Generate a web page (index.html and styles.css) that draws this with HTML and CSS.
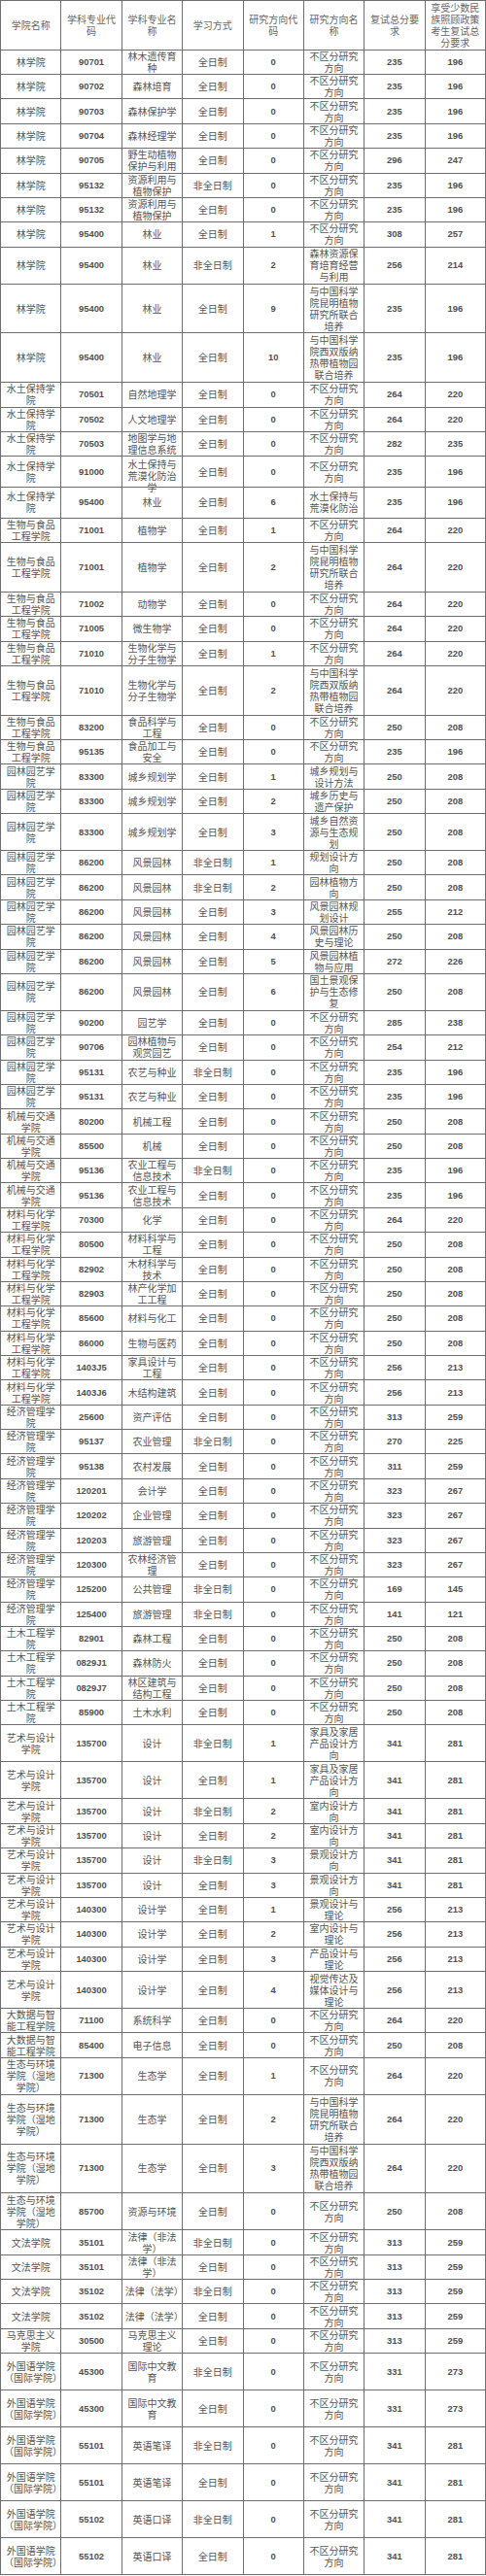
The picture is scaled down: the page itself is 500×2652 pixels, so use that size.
FILE: index.html
```html
<!DOCTYPE html>
<html lang="zh-CN">
<head>
<meta charset="utf-8">
<title>复试分数线</title>
<link rel="stylesheet" href="styles.css">
</head>
<body>
<table class="sheet">
<thead>
<tr class="u4"><th>学院名称</th><th>学科专业代码</th><th>学科专业名称</th><th>学习方式</th><th>研究方向代码</th><th>研究方向名称</th><th>复试总分要求</th><th>享受少数民族照顾政策考生复试总分要求</th></tr>
</thead>
<tbody>
<tr class="u2"><td>林学院</td><td>90701</td><td>林木遗传育种</td><td>全日制</td><td>0</td><td>不区分研究方向</td><td>235</td><td>196</td></tr>
<tr class="u2"><td>林学院</td><td>90702</td><td>森林培育</td><td>全日制</td><td>0</td><td>不区分研究方向</td><td>235</td><td>196</td></tr>
<tr class="u2"><td>林学院</td><td>90703</td><td>森林保护学</td><td>全日制</td><td>0</td><td>不区分研究方向</td><td>235</td><td>196</td></tr>
<tr class="u2"><td>林学院</td><td>90704</td><td>森林经理学</td><td>全日制</td><td>0</td><td>不区分研究方向</td><td>235</td><td>196</td></tr>
<tr class="u2"><td>林学院</td><td>90705</td><td>野生动植物保护与利用</td><td>全日制</td><td>0</td><td>不区分研究方向</td><td>296</td><td>247</td></tr>
<tr class="u2"><td>林学院</td><td>95132</td><td>资源利用与植物保护</td><td>非全日制</td><td>0</td><td>不区分研究方向</td><td>235</td><td>196</td></tr>
<tr class="u2"><td>林学院</td><td>95132</td><td>资源利用与植物保护</td><td>全日制</td><td>0</td><td>不区分研究方向</td><td>235</td><td>196</td></tr>
<tr class="u2"><td>林学院</td><td>95400</td><td>林业</td><td>全日制</td><td>1</td><td>不区分研究方向</td><td>308</td><td>257</td></tr>
<tr class="u3"><td>林学院</td><td>95400</td><td>林业</td><td>非全日制</td><td>2</td><td>森林资源保育培育经营与利用</td><td>256</td><td>214</td></tr>
<tr class="u4"><td>林学院</td><td>95400</td><td>林业</td><td>全日制</td><td>9</td><td>与中国科学院昆明植物研究所联合培养</td><td>235</td><td>196</td></tr>
<tr class="u4"><td>林学院</td><td>95400</td><td>林业</td><td>全日制</td><td>10</td><td>与中国科学院西双版纳热带植物园联合培养</td><td>235</td><td>196</td></tr>
<tr class="u2"><td>水土保持学院</td><td>70501</td><td>自然地理学</td><td>全日制</td><td>0</td><td>不区分研究方向</td><td>264</td><td>220</td></tr>
<tr class="u2"><td>水土保持学院</td><td>70502</td><td>人文地理学</td><td>全日制</td><td>0</td><td>不区分研究方向</td><td>264</td><td>220</td></tr>
<tr class="u2"><td>水土保持学院</td><td>70503</td><td>地图学与地理信息系统</td><td>全日制</td><td>0</td><td>不区分研究方向</td><td>282</td><td>235</td></tr>
<tr class="u25"><td>水土保持学院</td><td>91000</td><td><div class="spill">水土保持与荒漠化防治学</div></td><td>全日制</td><td>0</td><td>不区分研究方向</td><td>235</td><td>196</td></tr>
<tr class="u25"><td>水土保持学院</td><td>95400</td><td>林业</td><td>全日制</td><td>6</td><td>水土保持与荒漠化防治</td><td>235</td><td>196</td></tr>
<tr class="u2"><td>生物与食品工程学院</td><td>71001</td><td>植物学</td><td>全日制</td><td>1</td><td>不区分研究方向</td><td>264</td><td>220</td></tr>
<tr class="u4"><td>生物与食品工程学院</td><td>71001</td><td>植物学</td><td>全日制</td><td>2</td><td>与中国科学院昆明植物研究所联合培养</td><td>264</td><td>220</td></tr>
<tr class="u2"><td>生物与食品工程学院</td><td>71002</td><td>动物学</td><td>全日制</td><td>0</td><td>不区分研究方向</td><td>264</td><td>220</td></tr>
<tr class="u2"><td>生物与食品工程学院</td><td>71005</td><td>微生物学</td><td>全日制</td><td>0</td><td>不区分研究方向</td><td>264</td><td>220</td></tr>
<tr class="u2"><td>生物与食品工程学院</td><td>71010</td><td>生物化学与分子生物学</td><td>全日制</td><td>1</td><td>不区分研究方向</td><td>264</td><td>220</td></tr>
<tr class="u4"><td>生物与食品工程学院</td><td>71010</td><td>生物化学与分子生物学</td><td>全日制</td><td>2</td><td>与中国科学院西双版纳热带植物园联合培养</td><td>264</td><td>220</td></tr>
<tr class="u2"><td>生物与食品工程学院</td><td>83200</td><td>食品科学与工程</td><td>全日制</td><td>0</td><td>不区分研究方向</td><td>250</td><td>208</td></tr>
<tr class="u2"><td>生物与食品工程学院</td><td>95135</td><td>食品加工与安全</td><td>全日制</td><td>0</td><td>不区分研究方向</td><td>235</td><td>196</td></tr>
<tr class="u2"><td>园林园艺学院</td><td>83300</td><td>城乡规划学</td><td>全日制</td><td>1</td><td>城乡规划与设计方法</td><td>250</td><td>208</td></tr>
<tr class="u2"><td>园林园艺学院</td><td>83300</td><td>城乡规划学</td><td>全日制</td><td>2</td><td>城乡历史与遗产保护</td><td>250</td><td>208</td></tr>
<tr class="u3"><td>园林园艺学院</td><td>83300</td><td>城乡规划学</td><td>全日制</td><td>3</td><td>城乡自然资源与生态规划</td><td>250</td><td>208</td></tr>
<tr class="u2"><td>园林园艺学院</td><td>86200</td><td>风景园林</td><td>非全日制</td><td>1</td><td>规划设计方向</td><td>250</td><td>208</td></tr>
<tr class="u2"><td>园林园艺学院</td><td>86200</td><td>风景园林</td><td>非全日制</td><td>2</td><td>园林植物方向</td><td>250</td><td>208</td></tr>
<tr class="u2"><td>园林园艺学院</td><td>86200</td><td>风景园林</td><td>全日制</td><td>3</td><td>风景园林规划设计</td><td>255</td><td>212</td></tr>
<tr class="u2"><td>园林园艺学院</td><td>86200</td><td>风景园林</td><td>全日制</td><td>4</td><td>风景园林历史与理论</td><td>250</td><td>208</td></tr>
<tr class="u2"><td>园林园艺学院</td><td>86200</td><td>风景园林</td><td>全日制</td><td>5</td><td>风景园林植物与应用</td><td>272</td><td>226</td></tr>
<tr class="u3"><td>园林园艺学院</td><td>86200</td><td>风景园林</td><td>全日制</td><td>6</td><td>国土景观保护与生态修复</td><td>250</td><td>208</td></tr>
<tr class="u2"><td>园林园艺学院</td><td>90200</td><td>园艺学</td><td>全日制</td><td>0</td><td>不区分研究方向</td><td>285</td><td>238</td></tr>
<tr class="u2"><td>园林园艺学院</td><td>90706</td><td>园林植物与观赏园艺</td><td>全日制</td><td>0</td><td>不区分研究方向</td><td>254</td><td>212</td></tr>
<tr class="u2"><td>园林园艺学院</td><td>95131</td><td>农艺与种业</td><td>非全日制</td><td>0</td><td>不区分研究方向</td><td>235</td><td>196</td></tr>
<tr class="u2"><td>园林园艺学院</td><td>95131</td><td>农艺与种业</td><td>全日制</td><td>0</td><td>不区分研究方向</td><td>235</td><td>196</td></tr>
<tr class="u2"><td>机械与交通学院</td><td>80200</td><td>机械工程</td><td>全日制</td><td>0</td><td>不区分研究方向</td><td>250</td><td>208</td></tr>
<tr class="u2"><td>机械与交通学院</td><td>85500</td><td>机械</td><td>全日制</td><td>0</td><td>不区分研究方向</td><td>250</td><td>208</td></tr>
<tr class="u2"><td>机械与交通学院</td><td>95136</td><td>农业工程与信息技术</td><td>非全日制</td><td>0</td><td>不区分研究方向</td><td>235</td><td>196</td></tr>
<tr class="u2"><td>机械与交通学院</td><td>95136</td><td>农业工程与信息技术</td><td>全日制</td><td>0</td><td>不区分研究方向</td><td>235</td><td>196</td></tr>
<tr class="u2"><td>材料与化学工程学院</td><td>70300</td><td>化学</td><td>全日制</td><td>0</td><td>不区分研究方向</td><td>264</td><td>220</td></tr>
<tr class="u2"><td>材料与化学工程学院</td><td>80500</td><td>材料科学与工程</td><td>全日制</td><td>0</td><td>不区分研究方向</td><td>250</td><td>208</td></tr>
<tr class="u2"><td>材料与化学工程学院</td><td>82902</td><td>木材科学与技术</td><td>全日制</td><td>0</td><td>不区分研究方向</td><td>250</td><td>208</td></tr>
<tr class="u2"><td>材料与化学工程学院</td><td>82903</td><td>林产化学加工工程</td><td>全日制</td><td>0</td><td>不区分研究方向</td><td>250</td><td>208</td></tr>
<tr class="u2"><td>材料与化学工程学院</td><td>85600</td><td>材料与化工</td><td>全日制</td><td>0</td><td>不区分研究方向</td><td>250</td><td>208</td></tr>
<tr class="u2"><td>材料与化学工程学院</td><td>86000</td><td>生物与医药</td><td>全日制</td><td>0</td><td>不区分研究方向</td><td>250</td><td>208</td></tr>
<tr class="u2"><td>材料与化学工程学院</td><td>1403J5</td><td>家具设计与工程</td><td>全日制</td><td>0</td><td>不区分研究方向</td><td>256</td><td>213</td></tr>
<tr class="u2"><td>材料与化学工程学院</td><td>1403J6</td><td>木结构建筑</td><td>全日制</td><td>0</td><td>不区分研究方向</td><td>256</td><td>213</td></tr>
<tr class="u2"><td>经济管理学院</td><td>25600</td><td>资产评估</td><td>全日制</td><td>0</td><td>不区分研究方向</td><td>313</td><td>259</td></tr>
<tr class="u2"><td>经济管理学院</td><td>95137</td><td>农业管理</td><td>非全日制</td><td>0</td><td>不区分研究方向</td><td>270</td><td>225</td></tr>
<tr class="u2"><td>经济管理学院</td><td>95138</td><td>农村发展</td><td>全日制</td><td>0</td><td>不区分研究方向</td><td>311</td><td>259</td></tr>
<tr class="u2"><td>经济管理学院</td><td>120201</td><td>会计学</td><td>全日制</td><td>0</td><td>不区分研究方向</td><td>323</td><td>267</td></tr>
<tr class="u2"><td>经济管理学院</td><td>120202</td><td>企业管理</td><td>全日制</td><td>0</td><td>不区分研究方向</td><td>323</td><td>267</td></tr>
<tr class="u2"><td>经济管理学院</td><td>120203</td><td>旅游管理</td><td>全日制</td><td>0</td><td>不区分研究方向</td><td>323</td><td>267</td></tr>
<tr class="u2"><td>经济管理学院</td><td>120300</td><td>农林经济管理</td><td>全日制</td><td>0</td><td>不区分研究方向</td><td>323</td><td>267</td></tr>
<tr class="u2"><td>经济管理学院</td><td>125200</td><td>公共管理</td><td>非全日制</td><td>0</td><td>不区分研究方向</td><td>169</td><td>145</td></tr>
<tr class="u2"><td>经济管理学院</td><td>125400</td><td>旅游管理</td><td>非全日制</td><td>0</td><td>不区分研究方向</td><td>141</td><td>121</td></tr>
<tr class="u2"><td>土木工程学院</td><td>82901</td><td>森林工程</td><td>全日制</td><td>0</td><td>不区分研究方向</td><td>250</td><td>208</td></tr>
<tr class="u2"><td>土木工程学院</td><td>0829J1</td><td>森林防火</td><td>全日制</td><td>0</td><td>不区分研究方向</td><td>250</td><td>208</td></tr>
<tr class="u2"><td>土木工程学院</td><td>0829J7</td><td>林区建筑与结构工程</td><td>全日制</td><td>0</td><td>不区分研究方向</td><td>250</td><td>208</td></tr>
<tr class="u2"><td>土木工程学院</td><td>85900</td><td>土木水利</td><td>全日制</td><td>0</td><td>不区分研究方向</td><td>250</td><td>208</td></tr>
<tr class="u3"><td>艺术与设计学院</td><td>135700</td><td>设计</td><td>非全日制</td><td>1</td><td>家具及家居产品设计方向</td><td>341</td><td>281</td></tr>
<tr class="u3"><td>艺术与设计学院</td><td>135700</td><td>设计</td><td>全日制</td><td>1</td><td>家具及家居产品设计方向</td><td>341</td><td>281</td></tr>
<tr class="u2"><td>艺术与设计学院</td><td>135700</td><td>设计</td><td>非全日制</td><td>2</td><td>室内设计方向</td><td>341</td><td>281</td></tr>
<tr class="u2"><td>艺术与设计学院</td><td>135700</td><td>设计</td><td>全日制</td><td>2</td><td>室内设计方向</td><td>341</td><td>281</td></tr>
<tr class="u2"><td>艺术与设计学院</td><td>135700</td><td>设计</td><td>非全日制</td><td>3</td><td>景观设计方向</td><td>341</td><td>281</td></tr>
<tr class="u2"><td>艺术与设计学院</td><td>135700</td><td>设计</td><td>全日制</td><td>3</td><td>景观设计方向</td><td>341</td><td>281</td></tr>
<tr class="u2"><td>艺术与设计学院</td><td>140300</td><td>设计学</td><td>全日制</td><td>1</td><td>景观设计与理论</td><td>256</td><td>213</td></tr>
<tr class="u2"><td>艺术与设计学院</td><td>140300</td><td>设计学</td><td>全日制</td><td>2</td><td>室内设计与理论</td><td>256</td><td>213</td></tr>
<tr class="u2"><td>艺术与设计学院</td><td>140300</td><td>设计学</td><td>全日制</td><td>3</td><td>产品设计与理论</td><td>256</td><td>213</td></tr>
<tr class="u3"><td>艺术与设计学院</td><td>140300</td><td>设计学</td><td>全日制</td><td>4</td><td>视觉传达及媒体设计与理论</td><td>256</td><td>213</td></tr>
<tr class="u2"><td>大数据与智能工程学院</td><td>71100</td><td>系统科学</td><td>全日制</td><td>0</td><td>不区分研究方向</td><td>264</td><td>220</td></tr>
<tr class="u2"><td>大数据与智能工程学院</td><td>85400</td><td>电子信息</td><td>全日制</td><td>0</td><td>不区分研究方向</td><td>250</td><td>208</td></tr>
<tr class="u3"><td>生态与环境学院（湿地学院）</td><td>71300</td><td>生态学</td><td>全日制</td><td>1</td><td>不区分研究方向</td><td>264</td><td>220</td></tr>
<tr class="u4"><td>生态与环境学院（湿地学院）</td><td>71300</td><td>生态学</td><td>全日制</td><td>2</td><td>与中国科学院昆明植物研究所联合培养</td><td>264</td><td>220</td></tr>
<tr class="u4"><td>生态与环境学院（湿地学院）</td><td>71300</td><td>生态学</td><td>全日制</td><td>3</td><td>与中国科学院西双版纳热带植物园联合培养</td><td>264</td><td>220</td></tr>
<tr class="u3"><td>生态与环境学院（湿地学院）</td><td>85700</td><td>资源与环境</td><td>全日制</td><td>0</td><td>不区分研究方向</td><td>250</td><td>208</td></tr>
<tr class="u2"><td>文法学院</td><td>35101</td><td>法律（非法学）</td><td>非全日制</td><td>0</td><td>不区分研究方向</td><td>313</td><td>259</td></tr>
<tr class="u2"><td>文法学院</td><td>35101</td><td>法律（非法学）</td><td>全日制</td><td>0</td><td>不区分研究方向</td><td>313</td><td>259</td></tr>
<tr class="u2"><td>文法学院</td><td>35102</td><td>法律（法学）</td><td>非全日制</td><td>0</td><td>不区分研究方向</td><td>313</td><td>259</td></tr>
<tr class="u2"><td>文法学院</td><td>35102</td><td>法律（法学）</td><td>全日制</td><td>0</td><td>不区分研究方向</td><td>313</td><td>259</td></tr>
<tr class="u2"><td>马克思主义学院</td><td>30500</td><td>马克思主义理论</td><td>全日制</td><td>0</td><td>不区分研究方向</td><td>313</td><td>259</td></tr>
<tr class="u3"><td>外国语学院（国际学院）</td><td>45300</td><td>国际中文教育</td><td>非全日制</td><td>0</td><td>不区分研究方向</td><td>331</td><td>273</td></tr>
<tr class="u3"><td>外国语学院（国际学院）</td><td>45300</td><td>国际中文教育</td><td>全日制</td><td>0</td><td>不区分研究方向</td><td>331</td><td>273</td></tr>
<tr class="u3"><td>外国语学院（国际学院）</td><td>55101</td><td>英语笔译</td><td>非全日制</td><td>0</td><td>不区分研究方向</td><td>341</td><td>281</td></tr>
<tr class="u3"><td>外国语学院（国际学院）</td><td>55101</td><td>英语笔译</td><td>全日制</td><td>0</td><td>不区分研究方向</td><td>341</td><td>281</td></tr>
<tr class="u3"><td>外国语学院（国际学院）</td><td>55102</td><td>英语口译</td><td>非全日制</td><td>0</td><td>不区分研究方向</td><td>341</td><td>281</td></tr>
<tr class="u3"><td>外国语学院（国际学院）</td><td>55102</td><td>英语口译</td><td>全日制</td><td>0</td><td>不区分研究方向</td><td>341</td><td>281</td></tr>
</tbody>
</table>
</body>
</html>
```

FILE: styles.css
```css
html, body {
  margin: 0;
  padding: 0;
  background: #ffffff;
}

.sheet {
  width: 500px;
  border-collapse: collapse;
  table-layout: fixed;
}

.sheet th,
.sheet td {
  border: 1px solid #6e6e6e;
  padding: 0 3px;
  text-align: center;
  vertical-align: middle;
  font-family: "Noto Sans CJK SC", "Noto Sans CJK TC", sans-serif;
  font-size: 10px;
  line-height: 12px;
  font-weight: normal;
  color: #555555;
  overflow: visible;
}

.sheet th {
  color: #666666;
}

.sheet tbody td:nth-child(2),
.sheet tbody td:nth-child(5),
.sheet tbody td:nth-child(7),
.sheet tbody td:nth-child(8) {
  font-family: "Liberation Sans", Arial, sans-serif;
  font-weight: bold;
  font-size: 9.4px;
  color: #505050;
}

.sheet tr.u2 { height: 25.37px; }
.sheet tr.u25 { height: 31.72px; }
.sheet tr.u3 { height: 38.06px; }
.sheet tr.u4 { height: 50.75px; }

.spill {
  height: 28px;
  overflow: visible;
}
```
